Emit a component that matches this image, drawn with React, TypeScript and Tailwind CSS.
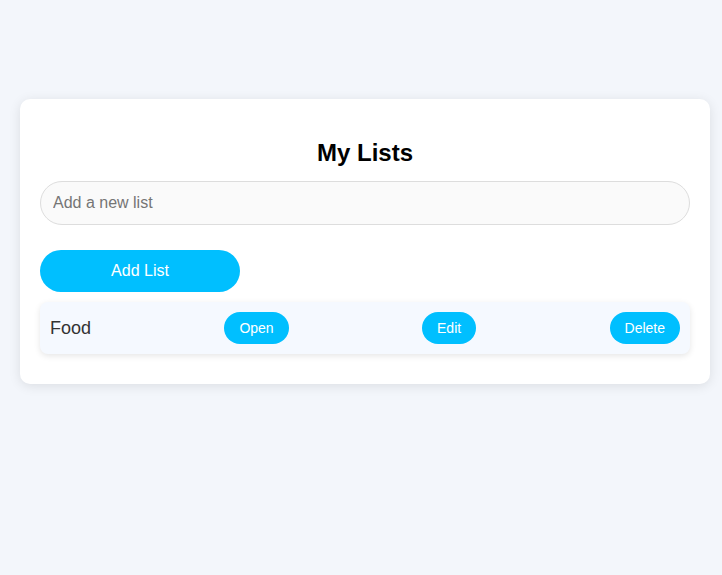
import React, { useState } from 'react';

const App: React.FC = () => {
  const [name, setName] = useState('');
  const [lists] = useState<string[]>(['Food']);

  return (
    <div className="min-h-screen w-full bg-[#f3f6fb] pt-[99px] pl-5 font-['Liberation_Sans',Arial,sans-serif]">
      <div className="w-[690px] bg-white rounded-[10px] shadow-[0_2px_12px_rgba(0,0,0,0.1)] px-5 pt-5 pb-[30px]">
        <h2 className="mt-5 mb-[14px] text-center text-2xl font-bold leading-[28px] text-black">My Lists</h2>
        <input
          value={name}
          onChange={(e) => setName(e.target.value)}
          placeholder="Add a new list"
          className="block w-full h-[44px] px-3 rounded-full border border-[#dddddd] bg-[#fafafa] text-base text-[#333] placeholder:text-[#757575] outline-none"
        />
        <button className="mt-[25px] block w-[200px] h-[42px] rounded-full bg-[#00bfff] text-white text-base">
          Add List
        </button>
        {lists.map((l) => (
          <div
            key={l}
            className="mt-[10px] h-[52px] flex items-center justify-between px-[10px] rounded-lg bg-[#f5f9ff] shadow-[0_2px_6px_rgba(0,0,0,0.1)]"
          >
            <span className="text-lg text-[#333]">{l}</span>
            <button className="h-8 px-[15px] rounded-full bg-[#00bfff] text-white text-sm">Open</button>
            <button className="h-8 px-[15px] rounded-full bg-[#00bfff] text-white text-sm">Edit</button>
            <button className="h-8 px-[15px] rounded-full bg-[#00bfff] text-white text-sm">Delete</button>
          </div>
        ))}
      </div>
    </div>
  );
};

export default App;
